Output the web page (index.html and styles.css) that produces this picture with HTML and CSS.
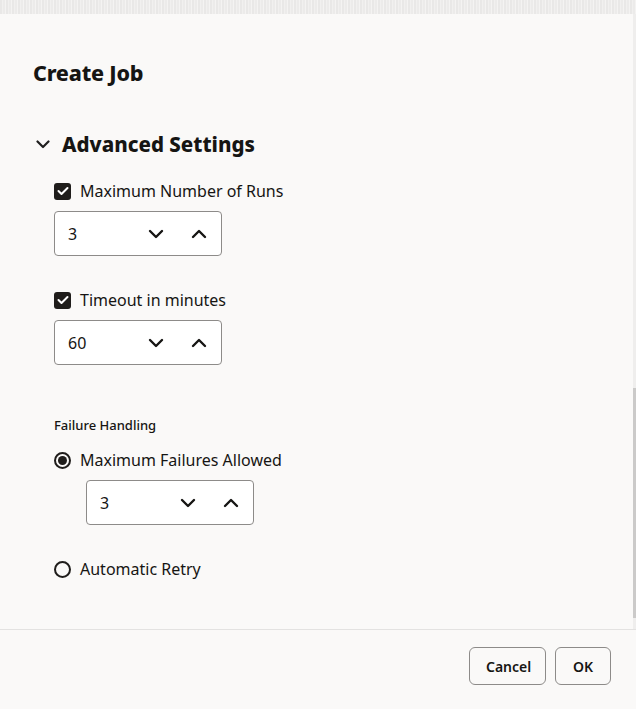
FILE: index.html
```html
<!DOCTYPE html>
<html>
<head>
<meta charset="utf-8">
<link rel="stylesheet" href="styles.css">
</head>
<body>
<div class="strip"></div>
<div class="dialog">
  <div class="body">
    <h1 class="title">Create Job</h1>
    <div class="section">
      <div class="section-head">
        <svg class="chev" width="14" height="9" viewBox="0 0 14 9"><path d="M1.5 1.5 L7 7 L12.5 1.5" fill="none" stroke="#1f1f1f" stroke-width="2.2" stroke-linecap="round" stroke-linejoin="round"/></svg>
        <h2>Advanced Settings</h2>
      </div>
      <div class="fields">
        <div class="field">
          <label class="check"><span class="box"><svg width="12" height="10" viewBox="0 0 12 10"><path d="M1.5 5 L4.5 8 L10.5 2" fill="none" stroke="#fff" stroke-width="2" stroke-linecap="round" stroke-linejoin="round"/></svg></span>Maximum Number of Runs</label>
          <div class="spin"><span class="val">3</span>
            <svg class="ic" width="16" height="10" viewBox="0 0 16 10"><path d="M2 2 L8 8 L14 2" fill="none" stroke="#161513" stroke-width="2.4" stroke-linecap="round" stroke-linejoin="round"/></svg>
            <svg class="ic" width="16" height="10" viewBox="0 0 16 10"><path d="M2 8 L8 2 L14 8" fill="none" stroke="#161513" stroke-width="2.4" stroke-linecap="round" stroke-linejoin="round"/></svg>
          </div>
        </div>
        <div class="field">
          <label class="check"><span class="box"><svg width="12" height="10" viewBox="0 0 12 10"><path d="M1.5 5 L4.5 8 L10.5 2" fill="none" stroke="#fff" stroke-width="2" stroke-linecap="round" stroke-linejoin="round"/></svg></span>Timeout in minutes</label>
          <div class="spin"><span class="val">60</span>
            <svg class="ic" width="16" height="10" viewBox="0 0 16 10"><path d="M2 2 L8 8 L14 2" fill="none" stroke="#161513" stroke-width="2.4" stroke-linecap="round" stroke-linejoin="round"/></svg>
            <svg class="ic" width="16" height="10" viewBox="0 0 16 10"><path d="M2 8 L8 2 L14 8" fill="none" stroke="#161513" stroke-width="2.4" stroke-linecap="round" stroke-linejoin="round"/></svg>
          </div>
        </div>
        <div class="group">
          <div class="group-label">Failure Handling</div>
          <label class="radio"><span class="dot on"></span>Maximum Failures Allowed</label>
          <div class="spin indent"><span class="val">3</span>
            <svg class="ic" width="16" height="10" viewBox="0 0 16 10"><path d="M2 2 L8 8 L14 2" fill="none" stroke="#161513" stroke-width="2.4" stroke-linecap="round" stroke-linejoin="round"/></svg>
            <svg class="ic" width="16" height="10" viewBox="0 0 16 10"><path d="M2 8 L8 2 L14 8" fill="none" stroke="#161513" stroke-width="2.4" stroke-linecap="round" stroke-linejoin="round"/></svg>
          </div>
          <label class="radio retry"><span class="dot"></span>Automatic Retry</label>
        </div>
      </div>
    </div>
    <div class="scrollbar"><div class="thumb"></div></div>
  </div>
  <div class="footer">
    <button class="btn cancel">Cancel</button>
    <button class="btn ok">OK</button>
  </div>
</div>
</body>
</html>
```
FILE: styles.css
```css
html, body { margin: 0; padding: 0; }
body {
  width: 636px; height: 709px; overflow: hidden;
  background: #faf9f8;
  font-family: "Noto Sans", "Open Sans", sans-serif;
  color: #161513;
}
.strip {
  height: 14px;
  background:
    repeating-linear-gradient(90deg, #e9e8e7 0 2px, #f1f0ef 2px 3px, #ecebea 3px 5px, #f4f3f2 5px 6px);
}
.dialog { display: flex; flex-direction: column; height: 695px; }
.body {
  position: relative;
  flex: 1;
  padding: 0 0 0 33px;
  border-bottom: 1px solid #e3e2e1;
}
.title {
  margin: 45px 0 0 0;
  font-size: 21.5px; font-weight: 800; line-height: 28px;
  letter-spacing: -0.2px;
}
.section { margin-top: 43px; }
.section-head { display: flex; align-items: center; gap: 12px; margin-left: 3px; }
.section-head h2 { margin: 0; font-size: 20.5px; font-weight: 800; line-height: 28px; letter-spacing: 0; }
.fields { padding-left: 21px; margin-top: 21px; }
.field { margin-bottom: 32px; }
.check, .radio {
  display: flex; align-items: center; gap: 9px;
  font-size: 16px; line-height: 24px; color: #161513;
}
.box {
  width: 17px; height: 17px; border-radius: 3px; background: #1f1d1b;
  display: flex; align-items: center; justify-content: center;
}
.spin {
  margin-top: 8px;
  width: 166px; height: 43px;
  border: 1px solid #8d8b89; border-radius: 4px; background: #fff;
  display: flex; align-items: center; box-sizing: content-box;
}
.spin .val { flex: 1; padding-left: 13px; font-size: 16px; }
.spin .ic { margin-right: 27px; }
.spin .ic:last-child { margin-right: 14px; }
.group { margin-top: 51px; }
.group-label { font-size: 13px; line-height: 18px; font-weight: 500; margin-bottom: 14px; }
.dot {
  width: 13px; height: 13px; border: 2px solid #1f1d1b; border-radius: 50%;
  display: flex; align-items: center; justify-content: center; box-sizing: content-box;
}
.dot.on::after { content: ""; width: 9px; height: 9px; border-radius: 50%; background: #1f1d1b; }
.indent { margin-left: 32px; margin-top: 8px; }
.retry { margin-top: 32px; }
.scrollbar {
  position: absolute; right: 0; top: 0; bottom: 0; width: 3px; background: #efeeed;
}
.thumb { position: absolute; left: 0; right: 0; top: 374px; height: 230px; background: #cbcac9; }
.footer {
  height: 79px; display: flex; justify-content: flex-end; align-items: flex-start;
  gap: 9px; padding: 17px 25px 0 0; box-sizing: border-box;
}
.btn {
  height: 38px; border: 1px solid #8d8b89; border-radius: 6px; background: #faf9f8;
  font-family: "Noto Sans", sans-serif; font-size: 14px; font-weight: 600; color: #161513;
  padding: 0 16px;
}
.btn.cancel { width: 77px; }
.btn.ok { width: 56px; }
```
